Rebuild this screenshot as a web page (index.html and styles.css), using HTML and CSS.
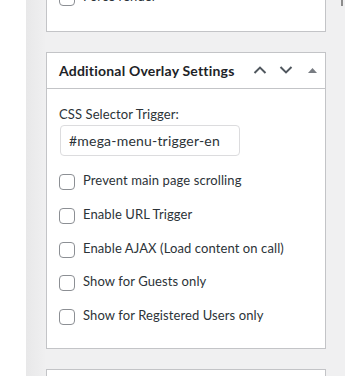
FILE: index.html
```html
<!DOCTYPE html>
<html>
<head>
<meta charset="utf-8">
<link rel="stylesheet" href="styles.css">
</head>
<body>
<div class="page">
  <div class="side"></div>
  <div class="main">
    <div class="box box-top">
      <label class="row"><span class="cb"></span><span>Force render</span></label>
    </div>
    <div class="box">
      <div class="box-head">
        <h2 class="title">Additional Overlay Settings</h2>
        <div class="actions">
          <span class="act"><svg width="14" height="8" viewBox="0 0 14 8"><path d="M1.5 7 L7 1.6 L12.5 7" fill="none" stroke="#50575e" stroke-width="2"/></svg></span>
          <span class="act"><svg width="14" height="8" viewBox="0 0 14 8"><path d="M1.5 1 L7 6.4 L12.5 1" fill="none" stroke="#50575e" stroke-width="2"/></svg></span>
          <span class="act"><svg width="9" height="5" viewBox="0 0 9 5"><path d="M0 5 L4.5 0 L9 5 Z" fill="#787c82"/></svg></span>
        </div>
      </div>
      <div class="box-body">
        <div class="field-label">CSS Selector Trigger:</div>
        <div class="input">#mega-menu-trigger-en</div>
        <div class="rows">
          <label class="row"><span class="cb"></span><span>Prevent main page scrolling</span></label>
          <label class="row"><span class="cb"></span><span>Enable URL Trigger</span></label>
          <label class="row"><span class="cb"></span><span>Enable AJAX (Load content on call)</span></label>
          <label class="row"><span class="cb"></span><span>Show for Guests only</span></label>
          <label class="row"><span class="cb"></span><span>Show for Registered Users only</span></label>
        </div>
      </div>
    </div>
    <div class="box box-next"></div>
  </div>
  <div class="scroll-thumb"></div>
</div>
</body>
</html>
```

FILE: styles.css
```css
html, body {
  margin: 0;
  padding: 0;
}
body {
  width: 345px;
  height: 376px;
  overflow: hidden;
  background: #f0f0f1;
  font-family: Lato, "Open Sans", sans-serif;
  font-size: 13px;
  letter-spacing: 0.1px;
  color: #2c3338;
}
.page {
  display: flex;
  height: 376px;
  position: relative;
}
.side {
  width: 26px;
  background: #ffffff;
  flex: none;
}
.main {
  flex: 1;
  padding-left: 20px;
  background: linear-gradient(to right, #e8e8e9 0px, #efeff0 18px, #f0f0f1 20px);
}
.box {
  width: 280px;
  box-sizing: border-box;
  background: #fff;
  border: 1px solid #c3c4c7;
  margin-bottom: 20px;
}
.box-top {
  margin-top: -28px;
  padding: 13px 12px 25px;
}
.box-head {
  display: flex;
  align-items: center;
  height: 36px;
  box-sizing: border-box;
  border-bottom: 1px solid #c3c4c7;
}
.title {
  flex: 1;
  margin: 0;
  padding-left: 12px;
  font-size: 14px;
  letter-spacing: 0.2px;
  font-weight: 700;
  color: #1d2327;
  line-height: 20px;
}
.actions {
  display: flex;
  height: 100%;
}
.act {
  width: 26px;
  display: flex;
  align-items: center;
  justify-content: center;
  margin-top: -1px;
}
.box-body {
  padding: 15px 12px 23px;
}
.field-label {
  line-height: 20px;
}
.input {
  width: 180px;
  height: 31px;
  box-sizing: border-box;
  margin-top: 1px;
  margin-left: 1px;
  border: 1px solid #dcdcde;
  border-radius: 4px;
  padding: 0 8px;
  font-size: 14px;
  letter-spacing: 0.2px;
  line-height: 29px;
  color: #2c3338;
}
.rows {
  display: flex;
  flex-direction: column;
  gap: 13.75px;
  margin-top: 14px;
}
.row {
  display: flex;
  align-items: flex-start;
  gap: 8px;
  line-height: 20px;
}
.cb {
  width: 16px;
  height: 16px;
  box-sizing: border-box;
  border: 1px solid #8c8f94;
  border-radius: 4px;
  background: #fff;
  margin-top: 4px;
  flex: none;
}
.box-next {
  height: 40px;
}
.scroll-thumb {
  position: absolute;
  left: 341px;
  top: 0;
  width: 2px;
  height: 6px;
  background: #8c8c8c;
}
```
